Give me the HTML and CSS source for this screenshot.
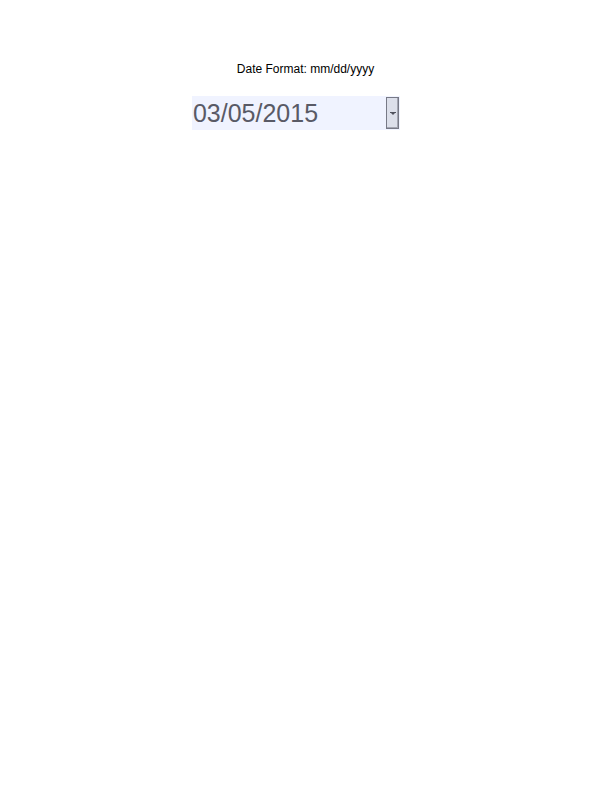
FILE: index.html
```html
<!DOCTYPE html>
<html lang="en">
<head>
<meta charset="utf-8">
<title>Date Format</title>
<link rel="stylesheet" href="styles.css">
</head>
<body>
<form class="date-form">
<label class="date-label" for="date">Date Format: mm/dd/yyyy</label>
<div class="date-field">
<input class="date-input" id="date" type="text" value="03/05/2015">
<button class="date-toggle" type="button" aria-label="Open calendar">
<svg class="arrow" viewBox="0 0 6 3" aria-hidden="true"><path d="M0 0h6v1H5L3 3 1 1H0z"/></svg>
</button>
</div>
</form>
</body>
</html>
```
FILE: styles.css
```css
* {
  box-sizing: border-box;
}

body {
  margin: 0;
  background: #fff;
  font-family: "Liberation Sans", Arial, sans-serif;
}

.date-form {
  display: flex;
  flex-direction: column;
  align-items: center;
  gap: 20px;
  padding-top: 62px;
}

.date-label {
  margin-right: 1px;
  color: #000;
  font-size: 12px;
  line-height: 14px;
}

.date-field {
  display: flex;
  width: 34%;
  height: 34px;
  margin-right: 20px;
  padding: 1px 1px 1px 0;
  background: #f0f3ff;
}

.date-input {
  flex: 1;
  min-width: 0;
  padding: 0 1px;
  border: 0;
  outline: 0;
  background: transparent;
  color: #595a66;
  font: 25px "Liberation Sans", Arial, sans-serif;
}

.date-toggle {
  display: flex;
  align-items: center;
  justify-content: center;
  width: 13px;
  padding: 0;
  border: 1px solid #777986;
  background: #dcdfea;
  box-shadow: inset -1px -1px #a3a5b2;
}

.arrow {
  width: 6px;
  height: 3px;
  fill: #50525e;
}
```
